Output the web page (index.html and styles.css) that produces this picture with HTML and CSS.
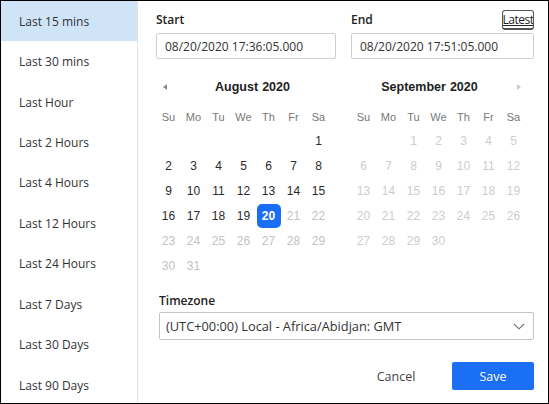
FILE: index.html
```html
<!DOCTYPE html>
<html>
<head>
<meta charset="utf-8">
<link rel="stylesheet" href="styles.css">
</head>
<body>
<div class="frame">
  <ul class="presets">
    <li class="preset active">Last 15 mins</li>
    <li class="preset">Last 30 mins</li>
    <li class="preset">Last Hour</li>
    <li class="preset">Last 2 Hours</li>
    <li class="preset">Last 4 Hours</li>
    <li class="preset">Last 12 Hours</li>
    <li class="preset">Last 24 Hours</li>
    <li class="preset">Last 7 Days</li>
    <li class="preset">Last 30 Days</li>
    <li class="preset">Last 90 Days</li>
  </ul>
  <div class="main">
    <div class="cols">
      <div class="col">
        <div class="label-row"><span class="label">Start</span></div>
        <div class="input">08/20/2020 17:36:05.000</div>
        <div class="cal">
          <div class="cal-head">
            <span class="nav"><span class="tri-left"></span></span>
            <span class="title"><span>August</span><span>2020</span></span>
          </div>
          <div class="grid">
            <span class="wd">Su</span><span class="wd">Mo</span><span class="wd">Tu</span><span class="wd">We</span><span class="wd">Th</span><span class="wd">Fr</span><span class="wd">Sa</span>
            <span></span><span></span><span></span><span></span><span></span><span></span><span class="d">1</span>
            <span class="d">2</span><span class="d">3</span><span class="d">4</span><span class="d">5</span><span class="d">6</span><span class="d">7</span><span class="d">8</span>
            <span class="d">9</span><span class="d">10</span><span class="d">11</span><span class="d">12</span><span class="d">13</span><span class="d">14</span><span class="d">15</span>
            <span class="d">16</span><span class="d">17</span><span class="d">18</span><span class="d">19</span><span class="d"><span class="sel">20</span></span><span class="d off">21</span><span class="d off">22</span>
            <span class="d off">23</span><span class="d off">24</span><span class="d off">25</span><span class="d off">26</span><span class="d off">27</span><span class="d off">28</span><span class="d off">29</span>
            <span class="d off">30</span><span class="d off">31</span>
          </div>
        </div>
      </div>
      <div class="col">
        <div class="label-row"><span class="label">End</span><button class="latest">Latest</button></div>
        <div class="input">08/20/2020 17:51:05.000</div>
        <div class="cal">
          <div class="cal-head">
            <span class="title"><span>September</span><span>2020</span></span>
            <span class="nav"><span class="tri-right"></span></span>
          </div>
          <div class="grid">
            <span class="wd">Su</span><span class="wd">Mo</span><span class="wd">Tu</span><span class="wd">We</span><span class="wd">Th</span><span class="wd">Fr</span><span class="wd">Sa</span>
            <span></span><span></span><span class="d dis">1</span><span class="d dis">2</span><span class="d dis">3</span><span class="d dis">4</span><span class="d dis">5</span>
            <span class="d dis">6</span><span class="d dis">7</span><span class="d dis">8</span><span class="d dis">9</span><span class="d dis">10</span><span class="d dis">11</span><span class="d dis">12</span>
            <span class="d dis">13</span><span class="d dis">14</span><span class="d dis">15</span><span class="d dis">16</span><span class="d dis">17</span><span class="d dis">18</span><span class="d dis">19</span>
            <span class="d dis">20</span><span class="d dis">21</span><span class="d dis">22</span><span class="d dis">23</span><span class="d dis">24</span><span class="d dis">25</span><span class="d dis">26</span>
            <span class="d dis">27</span><span class="d dis">28</span><span class="d dis">29</span><span class="d dis">30</span>
          </div>
        </div>
      </div>
    </div>
    <div class="tz">
      <div class="label">Timezone</div>
      <div class="select">
        <span>(UTC+00:00) Local - Africa/Abidjan: GMT</span>
        <svg class="chev" width="12" height="7" viewBox="0 0 12 7"><polyline points="0.8,0.8 6,5.8 11.2,0.8" fill="none" stroke="#666" stroke-width="1.1"/></svg>
      </div>
    </div>
    <div class="actions">
      <button class="btn cancel">Cancel</button>
      <button class="btn save">Save</button>
    </div>
  </div>
</div>
</body>
</html>
```

FILE: styles.css
```css
* { box-sizing: border-box; }
html, body { margin: 0; padding: 0; background: #fff; }
.frame {
  width: 549px;
  height: 404px;
  border: 1px solid #000;
  display: flex;
  overflow: hidden;
  font-family: "Open Sans", "Noto Sans", sans-serif;
  font-size: 12px;
  color: #333;
}
.presets {
  list-style: none;
  margin: 0;
  padding: 0;
  width: 137px;
  flex: none;
  border-right: 1px solid #e2e2e2;
}
.preset {
  height: 40.45px;
  display: flex;
  align-items: center;
  padding-left: 18px;
  color: #333;
}
.preset.active { background: #cfe4f7; }
.main {
  flex: 1;
  padding: 9px 14px 0 18px;
  display: flex;
  flex-direction: column;
}
.cols {
  display: grid;
  grid-template-columns: 180px 1fr;
  column-gap: 15px;
}
.label-row {
  height: 19px;
  display: flex;
  align-items: center;
  justify-content: space-between;
}
.label {
  font-weight: 600;
  color: #222;
  font-size: 12px;
  line-height: 16px;
}
.latest {
  height: 20px;
  padding: 0;
  margin: 0;
  border: 1px solid #555;
  border-bottom-width: 2px;
  border-radius: 3px;
  background: #fff;
  font-family: "Open Sans", sans-serif;
  font-size: 12px;
  line-height: 15px;
  color: #222;
  text-decoration: underline;
  letter-spacing: -0.5px;
  width: 32px;
  overflow: hidden;
  display: flex;
  justify-content: center;
  align-items: center;
}
.input {
  margin-top: 4px;
  height: 26px;
  border: 1px solid #cfcfcf;
  border-radius: 2px;
  padding-left: 8px;
  display: flex;
  align-items: center;
  color: #333;
}
.cal {
  margin-top: 18px;
  width: 175px;
  font-family: "Liberation Sans", Arial, sans-serif;
}
.cal-head {
  height: 20px;
  display: flex;
  align-items: center;
  margin-bottom: 9px;
}
.nav {
  width: 18px;
  display: flex;
  justify-content: center;
  align-items: center;
}
.tri-left {
  width: 0; height: 0;
  border-top: 3.5px solid transparent;
  border-bottom: 3.5px solid transparent;
  border-right: 4px solid #888;
}
.tri-right {
  width: 0; height: 0;
  border-top: 3.5px solid transparent;
  border-bottom: 3.5px solid transparent;
  border-left: 4px solid #ccc;
  margin-left: 4px;
}
.title {
  flex: 1;
  display: flex;
  justify-content: center;
  gap: 4px;
  font-weight: bold;
  font-size: 12.5px;
  color: #222;
}
.grid {
  display: grid;
  grid-template-columns: repeat(7, 25px);
  grid-template-rows: 22px repeat(6, 25px);
}
.wd {
  display: flex;
  align-items: center;
  justify-content: center;
  font-size: 11px;
  color: #777;
}
.d {
  display: flex;
  align-items: center;
  justify-content: center;
  font-size: 12px;
  color: #2a2a2a;
}
.d.off { color: #c2c2c2; }
.d.dis { color: #cdcdcd; }
.sel {
  width: 24px;
  height: 24px;
  border-radius: 5px;
  background: #1a6ef5;
  color: #fff;
  font-weight: bold;
  display: flex;
  align-items: center;
  justify-content: center;
}
.tz {
  margin-top: 15px;
  padding-left: 3px;
}
.select {
  margin-top: 3px;
  height: 28px;
  border: 1px solid #c4c4c4;
  border-radius: 2px;
  display: flex;
  align-items: center;
  justify-content: space-between;
  padding: 0 8px 0 6px;
  font-size: 12.8px;
  color: #333;
}
.chev { display: block; }
.actions {
  margin-top: 22px;
  display: flex;
  justify-content: flex-end;
  gap: 15px;
}
.btn {
  width: 82px;
  height: 28px;
  border: none;
  border-radius: 2px;
  font-family: "Open Sans", sans-serif;
  font-size: 12.5px;
  padding: 0;
}
.cancel { background: #fff; color: #444; }
.save { background: #1b6ff5; color: #fff; }
```
